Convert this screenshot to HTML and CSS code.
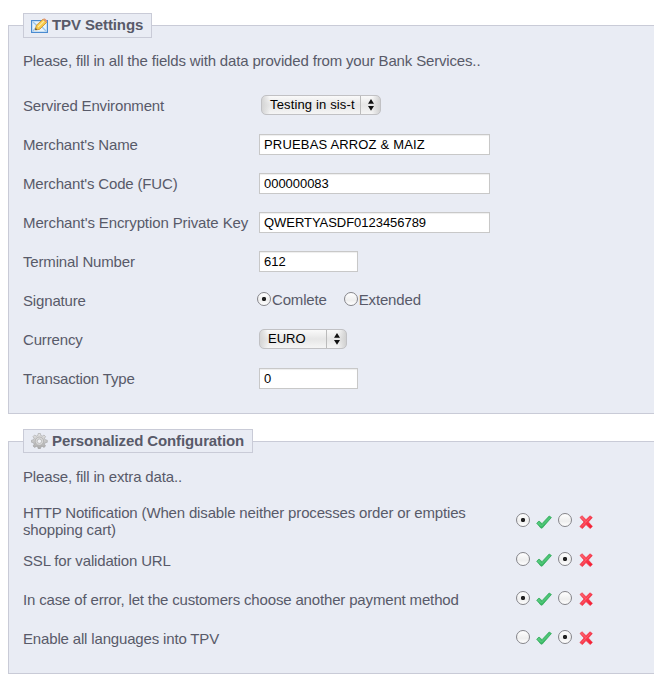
FILE: index.html
```html
<!DOCTYPE html>
<html lang="en">
<head>
<meta charset="utf-8">
<title>TPV Settings</title>
<link rel="stylesheet" href="styles.css">
</head>
<body>
<svg class="defs" width="0" height="0" aria-hidden="true">
  <defs>
    <linearGradient id="green" x1="0" y1="0" x2="1" y2="1"><stop offset="0" stop-color="#69d98e"/><stop offset="1" stop-color="#1ca54b"/></linearGradient>
    <linearGradient id="red" x1="0" y1="0" x2="1" y2="1"><stop offset="0" stop-color="#ff626e"/><stop offset="1" stop-color="#f5142c"/></linearGradient>
    <linearGradient id="grey" x1="0" y1="0" x2="0" y2="1"><stop offset="0" stop-color="#e5e5e5"/><stop offset="1" stop-color="#aaa"/></linearGradient>
    <symbol id="tick" viewBox="0 0 16 14"><path d="M.7 8.2 3 6l3 2.7L13.2 1l2.2 1.5L6.2 13.1H4.9z" fill="url(#green)" stroke="#32a95c" stroke-width=".8"/><path d="m2 8 3.6 3L14 2.6" fill="none" stroke="#62d088" stroke-width=".8"/></symbol>
    <symbol id="cross" viewBox="0 0 14 14"><path d="m1 2.4 2.1-1.6L7 4.7 11 .8l2.3 1.8L9.4 7l4 4.4-2.2 2.1L7 9.6l-3.6 4-2.5-2L5 7z" fill="url(#red)" stroke="#ee3445" stroke-width=".7"/><path d="m2.5 2.4 4.6 4.4m4.2-4.3L3 11.4" stroke="#ff6a77" stroke-width=".7"/></symbol>
    <symbol id="arrows" viewBox="0 0 8 12"><path d="M4 0 7 4.8H1zM1 7h6l-3 4.8z" fill="#111"/></symbol>
  </defs>
</svg>
<section class="panel panel-settings">
  <h2 class="legend">
    <svg class="legend-icon" viewBox="0 0 17 16"><rect x=".6" y="2.6" width="15.8" height="11.8" fill="#e7f3fc" stroke="#4a8bd0" stroke-width="1.2"/><path d="m2 4 6.5 6L15 4M2 13l4.5-5M15 13l-4-4" fill="none" stroke="#9cc6e9" stroke-width="1.3"/><path d="m4.3 12 1-4.6L12 1.2l3.6 3.2L8.7 11.3z" fill="#f8ca48" stroke="#c68c2b" stroke-width=".8"/><path d="m7 9 6-6" stroke="#ffe99a" stroke-width="1.2"/><path d="m12 1.2 1-.9q2.2.4 3.2 2.9l-.8 1.2z" fill="#e59872"/><path d="m4.3 12 .4-1.9 1.5 1.4z" fill="#443d38"/></svg>
    <span>TPV Settings</span>
  </h2>
  <p class="intro">Please, fill in all the fields with data provided from your Bank Services..</p>
  <div class="row"><label>Servired Environment</label><button class="select environment"><span>Testing in sis-t</span><i><svg><use href="#arrows"/></svg></i></button></div>
  <div class="row"><label>Merchant's Name</label><input class="wide name" value="PRUEBAS ARROZ &amp; MAIZ"></div>
  <div class="row"><label>Merchant's Code (FUC)</label><input class="wide" value="000000083"></div>
  <div class="row"><label class="key">Merchant's Encryption Private Key</label><input class="wide" value="QWERTYASDF0123456789"></div>
  <div class="row"><label>Terminal Number</label><input value="612"></div>
  <div class="row"><label>Signature</label><div class="signature"><label><input type="radio" name="signature" checked>Comlete</label><label><input type="radio" name="signature">Extended</label></div></div>
  <div class="row"><label>Currency</label><button class="select currency"><span>EURO</span><i><svg><use href="#arrows"/></svg></i></button></div>
  <div class="row"><label>Transaction Type</label><input value="0"></div>
</section>
<section class="panel panel-config">
  <h2 class="legend">
    <svg class="legend-icon" viewBox="0 0 17 16"><g fill="url(#grey)" stroke="#999" stroke-width=".5"><path d="M7.2.5h2.2l.4 2 1.5.6L13 2l1.6 1.6-1.1 1.7.6 1.4 2.2.5v2.1l-2.2.5-.6 1.5 1.1 1.7L13 14.5l-1.7-1.1-1.5.6-.4 1.7H7.2L6.8 14l-1.5-.6-1.7 1.1L2 13l1.1-1.7-.6-1.5-2-.5V7.2l2-.5.6-1.4L2 3.6 3.6 2l1.7 1.1 1.5-.6z"/><circle cx="8.4" cy="8.2" r="4.2" fill="#d8d8d8"/><circle cx="8.4" cy="8.2" r="2.2" fill="#f1f2f5"/></g></svg>
    <span>Personalized Configuration</span>
  </h2>
  <p class="intro">Please, fill in extra data..</p>
  <div class="option first"><span>HTTP Notification (When disable neither processes order or empties<br>shopping cart)</span><div class="choice"><input type="radio" name="http" checked><svg class="tick"><use href="#tick"/></svg><input type="radio" name="http"><svg class="cross"><use href="#cross"/></svg></div></div>
  <div class="option"><span>SSL for validation URL</span><div class="choice"><input type="radio" name="ssl"><svg class="tick"><use href="#tick"/></svg><input type="radio" name="ssl" checked><svg class="cross"><use href="#cross"/></svg></div></div>
  <div class="option"><span>In case of error, let the customers choose another payment method</span><div class="choice"><input type="radio" name="error" checked><svg class="tick"><use href="#tick"/></svg><input type="radio" name="error"><svg class="cross"><use href="#cross"/></svg></div></div>
  <div class="option"><span>Enable all languages into TPV</span><div class="choice"><input type="radio" name="languages"><svg class="tick"><use href="#tick"/></svg><input type="radio" name="languages" checked><svg class="cross"><use href="#cross"/></svg></div></div>
</section>
</body>
</html>
```
FILE: styles.css
```css
* { box-sizing: border-box; }
body {
  margin: 0;
  padding: 25px 0 6px 8px;
  background: #fff;
  color: #585a69;
  font: 15px/17px "Liberation Sans", Arial, sans-serif;
  letter-spacing: -.16px;
  overflow: hidden;
}
.defs { position: absolute; }
.panel {
  border: 1px solid #c9cbd7;
  border-right: 0;
  background: #e9ecf4;
  padding-left: 14px;
}
.panel-settings { height: 389px; margin-bottom: 27px; }
.panel-config { height: 233px; }
.legend {
  display: flex;
  align-items: center;
  width: 129px;
  height: 25px;
  margin: -13px 0 0;
  padding-left: 7px;
  border: 1px solid #c9cbd7;
  background: #e9ecf4;
  font-size: 15px;
  line-height: 17px;
  letter-spacing: -.11px;
  white-space: nowrap;
}
.legend span { margin-top: -2px; }
.panel-config .legend { width: 230px; height: 24px; }
.panel-config .legend span { margin-top: -1px; }
.legend-icon { width: 17px; height: 16px; margin-right: 4px; flex: none; }
.intro { margin: 14px 0 0; height: 34px; }
.panel-config .intro { margin-top: 15px; height: 33px; }
.row { display: flex; align-items: center; height: 39px; }
.row > label { width: 236px; flex: none; white-space: nowrap; }
.row > .key { letter-spacing: -.11px; }
input:not([type="radio"]) {
  width: 99px;
  height: 21px;
  margin: 0;
  padding: 0 4px 1px;
  border: 1px solid #c8c8c8;
  border-radius: 0;
  background: #fff;
  box-shadow: inset 0 1px 1px #eee;
  color: #000;
  font: 13px "Liberation Sans", Arial, sans-serif;
  letter-spacing: -.04px;
}
input.wide { width: 231px; }
input.name:not([type="radio"]) { letter-spacing: .17px; }
.select {
  display: flex;
  align-items: center;
  height: 20px;
  margin: -2px 0 0;
  padding: 0;
  border: 1px solid #c1c1c4;
  border-radius: 5px;
  background: linear-gradient(90deg, #d5d5d5, transparent 8px, transparent calc(100% - 8px), #d1d1d1), linear-gradient(#fafafa, #e6e6e6 50%, #f5f5f5);
  color: #000;
  font: 13px/16px "Liberation Sans", Arial, sans-serif;
  white-space: nowrap;
}
.select span { flex: 1; padding-left: 8px; text-align: left; }
.select i { display: flex; align-items: center; justify-content: center; width: 20px; height: 18px; border-left: 1px solid #bbb; }
.select svg { width: 8px; height: 12px; }
.environment { width: 120px; margin-left: 2px; letter-spacing: .15px; }
.currency { width: 88px; }
input[type="radio"] {
  appearance: none;
  flex: none;
  width: 14px;
  height: 14px;
  margin: 0;
  border: 1px solid #85858a;
  border-radius: 50%;
  background: linear-gradient(#fff, #eee 60%, #fff);
}
input[type="radio"]:checked { background: radial-gradient(circle, #222 0 1.8px, transparent 2.5px), linear-gradient(#fff, #eee 60%, #fff); }
.signature { display: flex; gap: 17px; margin: -2px 0 0 -2px; }
.signature label { display: flex; align-items: center; }
.signature input { margin: -2px 1px 0 0; }
.option { display: flex; align-items: center; height: 39px; }
.option.first { height: 40px; }
.option > span { width: 493px; flex: none; white-space: nowrap; }
.choice { display: flex; align-items: center; margin-top: -2px; }
.first .choice { margin-top: 0; }
.choice input { margin-top: -2px; }
.tick { width: 16px; height: 14px; margin: 1px 6px 0; }
.cross { width: 14px; height: 14px; margin: 1px 0 0 7px; }
```
